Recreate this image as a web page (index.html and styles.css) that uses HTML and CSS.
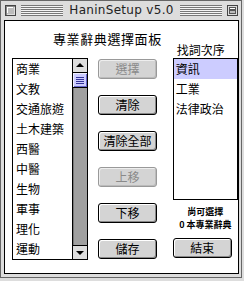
FILE: index.html
```html
<!DOCTYPE html>
<html lang="zh-Hant">
<head>
    <meta charset="UTF-8">
    <title>HaninSetup v5.0</title>
    <link rel="stylesheet" href="styles.css">
</head>
<body>
    <div class="window">
        <div class="titlebar">
            <span class="winbox">
                <svg width="11" height="11" viewBox="0 0 11 11">
                    <rect x="0.5" y="0.5" width="10" height="10" fill="#ddd" stroke="#444"/>
                    <path d="M1 1h9v1H2v8H1z" fill="#888"/>
                    <path d="M2 2h7v7H2z" fill="#bbb"/>
                    <path d="M2 2h6v1H3v5H2z" fill="#fff"/>
                </svg>
            </span>
            <span class="stripes"></span>
            <span class="title">HaninSetup v5.0</span>
            <span class="stripes"></span>
            <span class="winbox">
                <svg width="11" height="11" viewBox="0 0 11 11">
                    <rect x="0.5" y="0.5" width="10" height="10" fill="#ddd" stroke="#444"/>
                    <rect x="2.5" y="2.5" width="6" height="2" fill="#fff" stroke="#555"/>
                    <rect x="2.5" y="5.5" width="6" height="3" fill="#bbb" stroke="#555"/>
                </svg>
            </span>
        </div>

        <div class="content">
            <div class="left-group">
                <div class="heading">專業辭典選擇面板</div>
                <div class="row">
                    <div class="list">
                        <ul class="items">
                            <li>商業</li>
                            <li>文教</li>
                            <li>交通旅遊</li>
                            <li>土木建築</li>
                            <li>西醫</li>
                            <li>中醫</li>
                            <li>生物</li>
                            <li>軍事</li>
                            <li>理化</li>
                            <li>運動</li>
                        </ul>
                        <div class="scrollbar">
                            <div class="arrow up"></div>
                            <div class="thumb"><span></span></div>
                            <div class="track"></div>
                            <div class="arrow down"></div>
                        </div>
                    </div>
                    <div class="buttons">
                        <button class="btn" disabled>選擇</button>
                        <button class="btn">清除</button>
                        <button class="btn">清除全部</button>
                        <button class="btn" disabled>上移</button>
                        <button class="btn">下移</button>
                        <button class="btn">儲存</button>
                    </div>
                </div>
            </div>

            <div class="right-col">
                <div class="label">找詞次序</div>
                <ul class="order">
                    <li class="selected">資訊</li>
                    <li>工業</li>
                    <li>法律政治</li>
                </ul>
                <div class="note">
                    <div>尚可選擇</div>
                    <div>0 本專業辭典</div>
                </div>
                <button class="btn">結束</button>
            </div>
        </div>
    </div>
</body>
</html>
```

FILE: styles.css
```css
* { box-sizing: border-box; }

body {
    margin: 0;
    background: #dddddd;
    font: 12px/20px "Noto Sans CJK TC", sans-serif;
    color: #000;
}

/* window frame */

.window {
    width: 242px;
    height: 278px;
    border: 1px solid #666;
    background: #dddddd;
    display: flex;
    flex-direction: column;
}

.titlebar {
    height: 19px;
    display: flex;
    align-items: flex-start;
    padding: 4px 3px 0 4px;
}

.winbox {
    flex: none;
    width: 11px;
    height: 11px;
    display: block;
}
.winbox svg { display: block; }

.stripes {
    flex: 1;
    height: 11px;
    margin: 0 5px;
    background: repeating-linear-gradient(to bottom, #777 0 1px, #f4f4f4 1px 2px);
    border-bottom: 1px solid #777;
}

.title {
    flex: none;
    font: 12px/11px "DejaVu Sans", sans-serif;
    letter-spacing: 0.3px;
    color: #222;
    padding: 0 1px;
}

.content {
    flex: 1;
    margin: 0 2px 3px 3px;
    border: 1px solid #000;
    background: #fff;
    display: flex;
}

/* left part: dictionary list + buttons */

.left-group {
    padding: 10px 0 0 7px;
}

.heading {
    height: 16px;
    line-height: 16px;
    font-size: 13px;
    letter-spacing: 0.6px;
    padding-left: 41px;
    white-space: nowrap;
}

.row {
    display: flex;
    margin-top: 11px;
}

.list {
    width: 76px;
    height: 202px;
    border: 1px solid #000;
    display: flex;
}

ul {
    margin: 0;
    padding: 0;
    list-style: none;
}

.items {
    flex: 1;
}
.items li {
    height: 20px;
    padding-left: 3px;
    white-space: nowrap;
}

.scrollbar {
    width: 15px;
    border-left: 1px solid #000;
    display: flex;
    flex-direction: column;
}

.arrow {
    height: 14px;
    background: #dddddd;
    position: relative;
}
.arrow.up { border-bottom: 1px solid #000; }
.arrow.down { border-top: 1px solid #000; }
.arrow::after {
    content: "";
    position: absolute;
    left: 3px;
    border-left: 4px solid transparent;
    border-right: 4px solid transparent;
}
.arrow.up::after {
    top: 4px;
    border-bottom: 4px solid #000;
}
.arrow.down::after {
    top: 5px;
    border-top: 4px solid #000;
}

.thumb {
    height: 15px;
    background: #ccccff;
    border-bottom: 1px solid #000;
    box-shadow: inset 1px 1px #eef, inset -1px -1px #6666cc;
    display: flex;
    align-items: center;
    justify-content: center;
}
.thumb span {
    width: 8px;
    height: 7px;
    background: repeating-linear-gradient(to bottom, #333399 0 1px, transparent 1px 2px);
}

.track {
    flex: 1;
    background: #a0a0a0;
    box-shadow: inset 1px 0 #777;
}

.buttons {
    width: 59px;
    margin-left: 10px;
    padding-top: 1px;
    display: flex;
    flex-direction: column;
    gap: 16px;
}

/* Platinum push button */

.btn {
    display: block;
    width: 59px;
    height: 20px;
    padding: 0;
    border: 1px solid #000;
    border-radius: 3px;
    background: #d4d4d4;
    box-shadow: inset 1px 1px #fff, inset -1px -1px #888;
    font: 12px/18px "Noto Sans CJK TC", sans-serif;
    color: #000;
    text-align: center;
}
.btn:disabled {
    border-color: #999;
    color: #8a8a8a;
    box-shadow: inset 1px 1px #eee, inset -1px -1px #bbb;
}

/* right part: search order */

.right-col {
    width: 65px;
    margin-left: 11px;
    padding-top: 22px;
}

.label {
    line-height: 14px;
    padding-left: 4px;
    margin-bottom: 1px;
}

.order {
    height: 142px;
    border: 1px solid #000;
}
.order li {
    height: 20px;
    padding-left: 2px;
    white-space: nowrap;
}
.order .selected {
    background: #ccccff;
}

.note {
    margin-top: 5px;
    font-size: 9px;
    line-height: 13px;
    font-weight: 700;
    text-align: center;
    white-space: nowrap;
}

.right-col .btn {
    margin-top: 7px;
}
```
